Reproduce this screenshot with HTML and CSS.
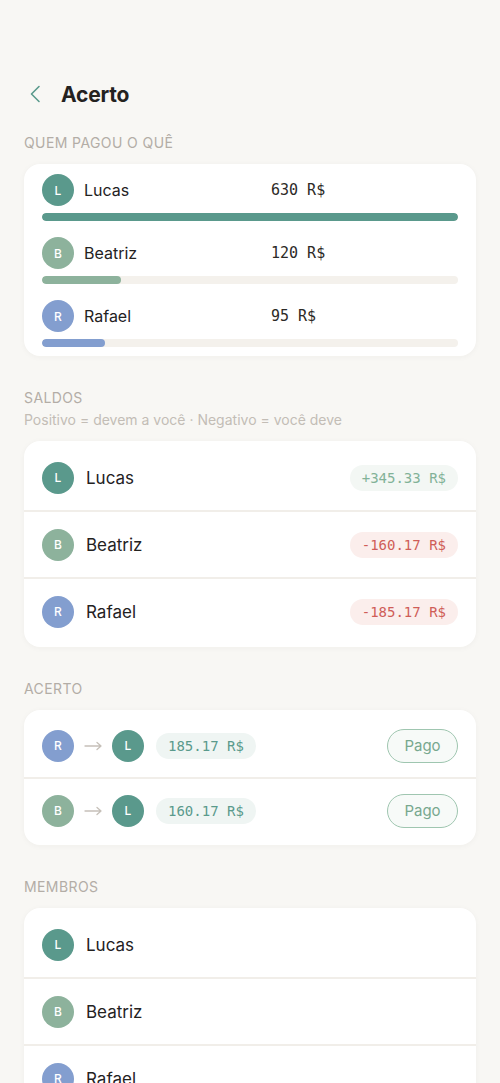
FILE: index.html
```html
<!DOCTYPE html>
<html>
  <head>
    <title>Acerto</title>
    <meta charset="utf-8" />
    <meta name="viewport" content="width=device-width, initial-scale=1.0" />
    <link rel="stylesheet" href="styles.css">
  </head>
  <body>
    <div class="page">
      <div class="header">
        <button class="back_button">
          <svg width="12" height="18" viewBox="0 0 12 18" fill="none" stroke="currentColor" stroke-width="1.6" stroke-linecap="round" stroke-linejoin="round">
            <path d="M10 1.5 L2.5 9 L10 16.5" />
          </svg>
        </button>
        <h1 class="title">Acerto</h1>
      </div>

      <!-- Quem pagou -->
      <p class="section_label">QUEM PAGOU O QUÊ</p>
      <div class="card card_paid">
        <div class="paid_row">
          <div class="paid_head">
            <span class="avatar avatar_l">L</span>
            <span class="paid_name">Lucas</span>
            <span class="paid_amount">630 R$</span>
          </div>
          <div class="bar"><div class="bar_fill fill_l" style="width: 100%"></div></div>
        </div>
        <div class="paid_row">
          <div class="paid_head">
            <span class="avatar avatar_b">B</span>
            <span class="paid_name">Beatriz</span>
            <span class="paid_amount">120 R$</span>
          </div>
          <div class="bar"><div class="bar_fill fill_b" style="width: 19.05%"></div></div>
        </div>
        <div class="paid_row">
          <div class="paid_head">
            <span class="avatar avatar_r">R</span>
            <span class="paid_name">Rafael</span>
            <span class="paid_amount">95 R$</span>
          </div>
          <div class="bar"><div class="bar_fill fill_r" style="width: 15.08%"></div></div>
        </div>
      </div>

      <!-- Saldos -->
      <p class="section_label">SALDOS</p>
      <p class="section_hint">Positivo = devem a você · Negativo = você deve</p>
      <div class="card card_list">
        <div class="list_row">
          <span class="avatar avatar_l">L</span>
          <span class="list_name">Lucas</span>
          <span class="pill pill_pos">+345.33 R$</span>
        </div>
        <div class="list_row">
          <span class="avatar avatar_b">B</span>
          <span class="list_name">Beatriz</span>
          <span class="pill pill_neg">-160.17 R$</span>
        </div>
        <div class="list_row">
          <span class="avatar avatar_r">R</span>
          <span class="list_name">Rafael</span>
          <span class="pill pill_neg">-185.17 R$</span>
        </div>
      </div>

      <!-- Acerto -->
      <p class="section_label">ACERTO</p>
      <div class="card card_list">
        <div class="list_row settle_row">
          <span class="avatar avatar_r">R</span>
          <svg class="arrow" width="18" height="10" viewBox="0 0 18 10" fill="none" stroke="currentColor" stroke-width="1.3" stroke-linecap="round" stroke-linejoin="round">
            <path d="M1 5 H17 M13 1.5 L17 5 L13 8.5" />
          </svg>
          <span class="avatar avatar_l">L</span>
          <span class="pill pill_settle">185.17 R$</span>
          <button class="paid_button">Pago</button>
        </div>
        <div class="list_row settle_row">
          <span class="avatar avatar_b">B</span>
          <svg class="arrow" width="18" height="10" viewBox="0 0 18 10" fill="none" stroke="currentColor" stroke-width="1.3" stroke-linecap="round" stroke-linejoin="round">
            <path d="M1 5 H17 M13 1.5 L17 5 L13 8.5" />
          </svg>
          <span class="avatar avatar_l">L</span>
          <span class="pill pill_settle">160.17 R$</span>
          <button class="paid_button">Pago</button>
        </div>
      </div>

      <!-- Membros -->
      <p class="section_label">MEMBROS</p>
      <div class="card card_list">
        <div class="list_row">
          <span class="avatar avatar_l">L</span>
          <span class="list_name">Lucas</span>
        </div>
        <div class="list_row">
          <span class="avatar avatar_b">B</span>
          <span class="list_name">Beatriz</span>
        </div>
        <div class="list_row">
          <span class="avatar avatar_r">R</span>
          <span class="list_name">Rafael</span>
        </div>
      </div>
    </div>
  </body>
</html>
```

FILE: styles.css
```css
body {
  margin: 0;
  padding: 0;
  background-color: #f8f7f4;
  font-family: Inter, "Noto Sans", sans-serif;
  color: #24221f;
}
p {
  margin: 0;
  padding: 0;
}

.page {
  padding: 77px 24px 40px;
}

.header {
  height: 34px;
  display: flex;
  align-items: center;
}
.back_button {
  background-color: transparent;
  border: 0;
  padding: 0;
  margin-left: 5px;
  width: 32px;
  height: 34px;
  display: flex;
  align-items: center;
  color: #5a9a8c;
}
.title {
  margin: 0;
  font-size: 21px;
  font-weight: 700;
  letter-spacing: -0.2px;
}

.section_label {
  margin-top: 24px;
  font-size: 14px;
  line-height: 16px;
  letter-spacing: 0.4px;
  color: #b3ada6;
}
.section_hint {
  margin-top: 6px;
  font-size: 14px;
  line-height: 16px;
  color: #c3bdb6;
}

.card {
  background-color: #fff;
  border-radius: 16px;
  box-shadow: 0 1px 6px rgba(60, 50, 30, 0.04);
  margin-top: 13px;
  margin-bottom: 34px;
}
.card + .section_label {
  margin-top: 0;
}

/* Quem pagou */
.card_paid {
  padding: 10px 18px 9px;
  display: flex;
  flex-direction: column;
  gap: 16px;
}
.paid_head {
  display: flex;
  align-items: center;
}
.paid_name {
  flex: 1;
  margin-left: 10px;
  font-size: 16px;
}
.paid_amount {
  flex: 1;
  font-family: "DejaVu Sans Mono", "Liberation Mono", monospace;
  font-size: 15px;
  color: #2c2a27;
}
.bar {
  margin-top: 7px;
  height: 8px;
  border-radius: 4px;
  background-color: #f4f1ec;
  overflow: hidden;
}
.bar_fill {
  height: 100%;
  border-radius: 4px;
}
.fill_l {
  background-color: #5a998c;
}
.fill_b {
  background-color: #8db29c;
}
.fill_r {
  background-color: #839ecf;
}

/* Avatars */
.avatar {
  width: 32px;
  height: 32px;
  border-radius: 50%;
  flex-shrink: 0;
  display: flex;
  align-items: center;
  justify-content: center;
  color: #fff;
  font-size: 12px;
  font-weight: 500;
}
.avatar_l {
  background-color: #5a998c;
}
.avatar_b {
  background-color: #8db29c;
}
.avatar_r {
  background-color: #839ecf;
}

/* Lists */
.card_list {
  padding: 4px 0 3px;
}
.list_row {
  min-height: 65px;
  padding: 0 18px;
  display: flex;
  align-items: center;
  gap: 12px;
  border-bottom: 2px solid #f1eee9;
}
.list_row:last-child {
  border-bottom: 0;
}
.list_name {
  flex: 1;
  font-size: 17px;
}

.pill {
  font-family: "DejaVu Sans Mono", "Liberation Mono", monospace;
  font-size: 14px;
  line-height: 26px;
  height: 26px;
  padding: 0 12px;
  border-radius: 13px;
}
.pill_pos {
  color: #82b298;
  background-color: #f3f7f4;
}
.pill_neg {
  color: #cf5d58;
  background-color: #fbeeec;
}

/* Acerto */
.settle_row {
  min-height: 63px;
  gap: 10px;
}
.arrow {
  color: #c6c0b9;
  flex-shrink: 0;
}
.pill_settle {
  margin-left: 2px;
  color: #5a9a8c;
  background-color: #eff5f3;
}
.paid_button {
  margin-left: auto;
  width: 71px;
  height: 34px;
  border: 1.5px solid #9fc6b0;
  border-radius: 17px;
  background-color: #f7faf8;
  color: #78a88f;
  font-family: Inter, "Noto Sans", sans-serif;
  font-size: 15px;
}
```
